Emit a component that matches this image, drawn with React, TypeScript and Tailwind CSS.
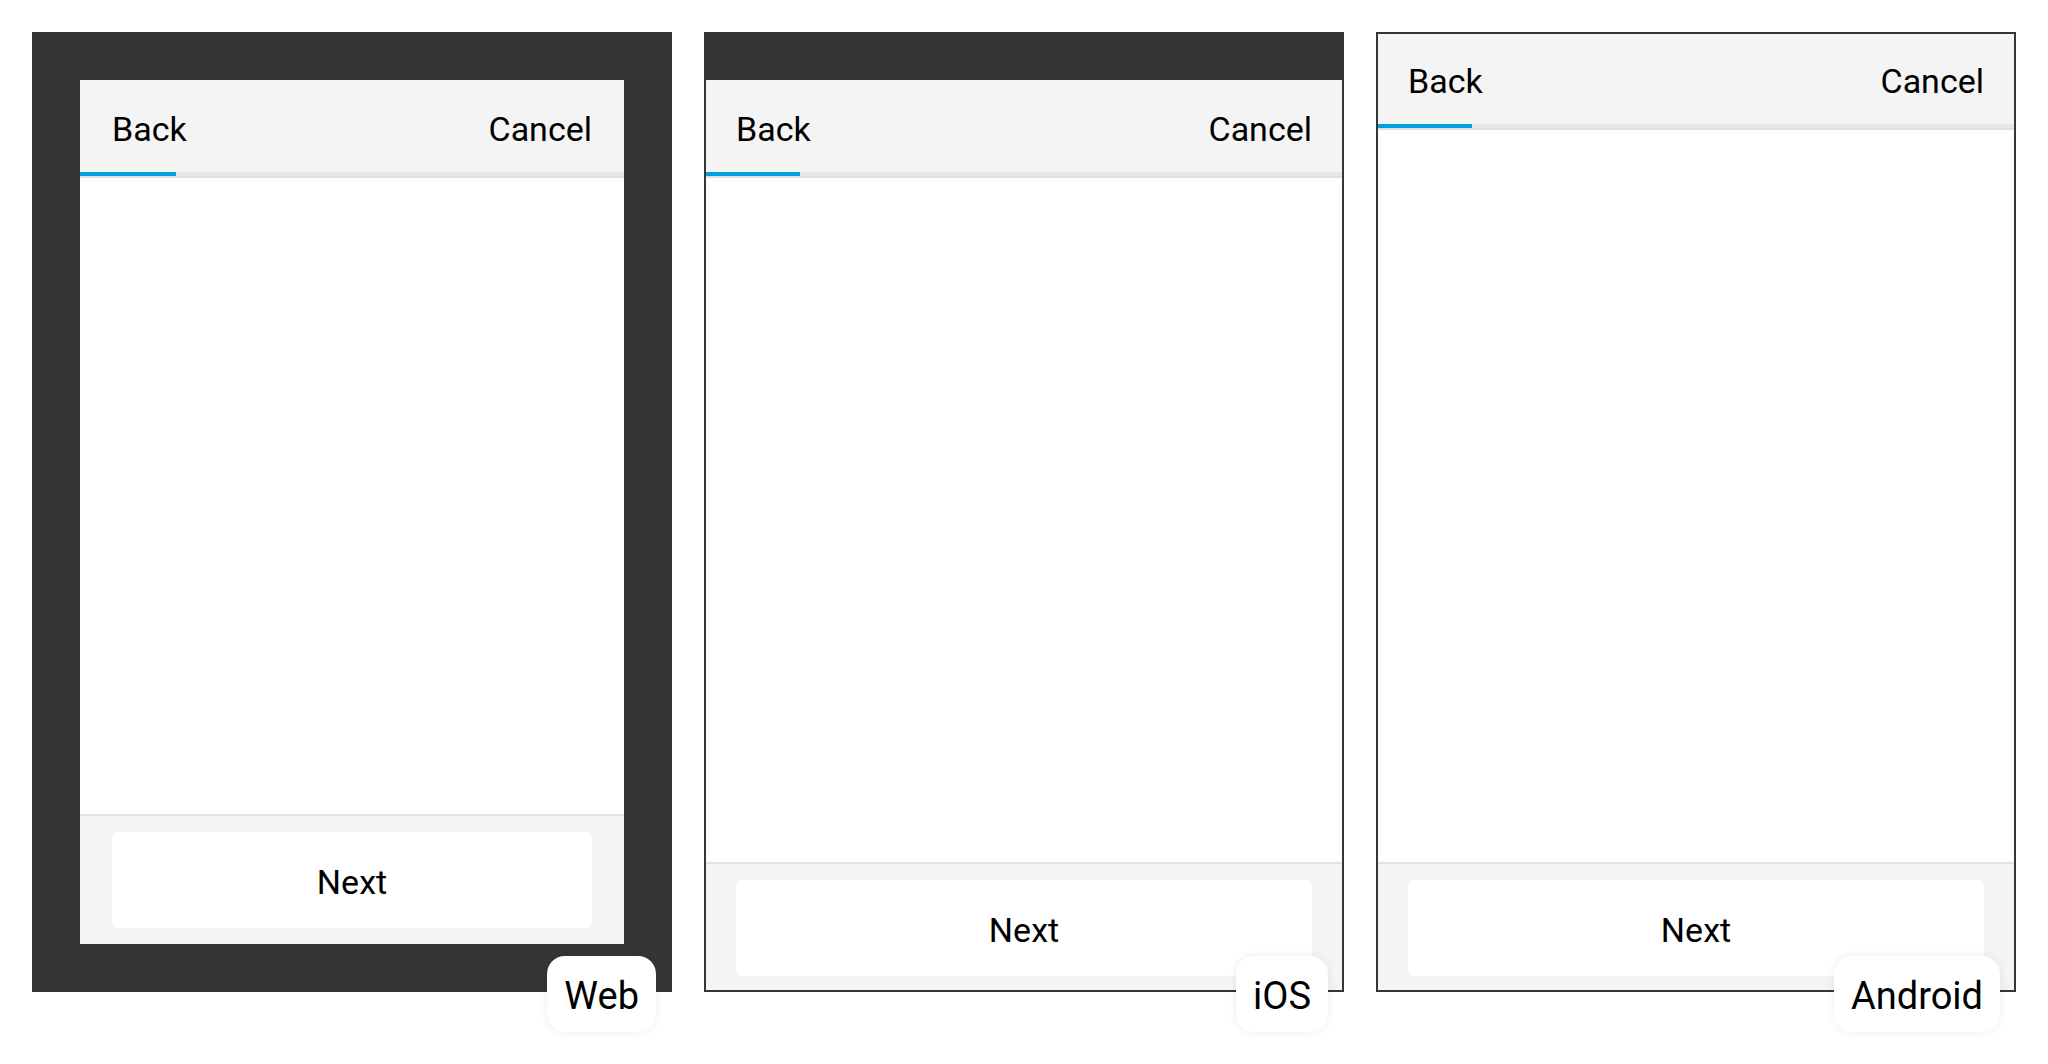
import React from "react";

type Platform = "web" | "ios" | "android";

function Header({ statusBar }: { statusBar?: boolean }) {
    return (
        <div className="flex flex-col">
            {statusBar && <div className="h-12 bg-[#353535]" />}
            <div className="flex h-[92px] items-center justify-between bg-[#f4f4f4] px-8 pt-[6px] text-[34px] text-black">
                <span>Back</span>
                <span>Cancel</span>
            </div>
            <div className="h-1 bg-[#e5e7e8]">
                <div className="h-full w-24 bg-[#00a0dc]" />
            </div>
            <div className="h-[2px] bg-[#dedfe0]" />
        </div>
    );
}

function Footer() {
    return (
        <div className="border-t-2 border-[#e2e2e2] bg-[#f4f4f4] px-8 py-4">
            <div className="flex h-24 items-center justify-center rounded-lg bg-white pt-[5px] text-[34px] text-black">
                Next
            </div>
        </div>
    );
}

function Screen({ statusBar }: { statusBar?: boolean }) {
    return (
        <div className="flex h-full flex-col bg-white">
            <Header statusBar={statusBar} />
            <div className="flex-1" />
            <Footer />
        </div>
    );
}

function Badge({ label }: { label: string }) {
    return (
        <div className="absolute right-4 bottom-[-40px] flex h-[76px] items-center rounded-[18px] bg-white px-[17px] pt-[5px] text-[38px] text-black shadow-[0_0_8px_rgba(0,0,0,0.08)]">
            {label}
        </div>
    );
}

function Device({ platform, label }: { platform: Platform; label: string }) {
    if (platform === "web") {
        return (
            <div className="relative h-[960px] w-[640px] shrink-0 bg-[#353535] p-12">
                <Screen />
                <Badge label={label} />
            </div>
        );
    }

    return (
        <div className="relative h-[960px] w-[640px] shrink-0">
            <Screen statusBar={platform === "ios"} />
            <div className="pointer-events-none absolute inset-0 border-2 border-[#353535]" />
            <Badge label={label} />
        </div>
    );
}

export default function App() {
    return (
        <div
            className="flex h-[1064px] w-[2048px] gap-8 bg-white p-8"
            style={{ fontFamily: "Roboto, 'Noto Sans', sans-serif" }}
        >
            <Device platform="web" label="Web" />
            <Device platform="ios" label="iOS" />
            <Device platform="android" label="Android" />
        </div>
    );
}
